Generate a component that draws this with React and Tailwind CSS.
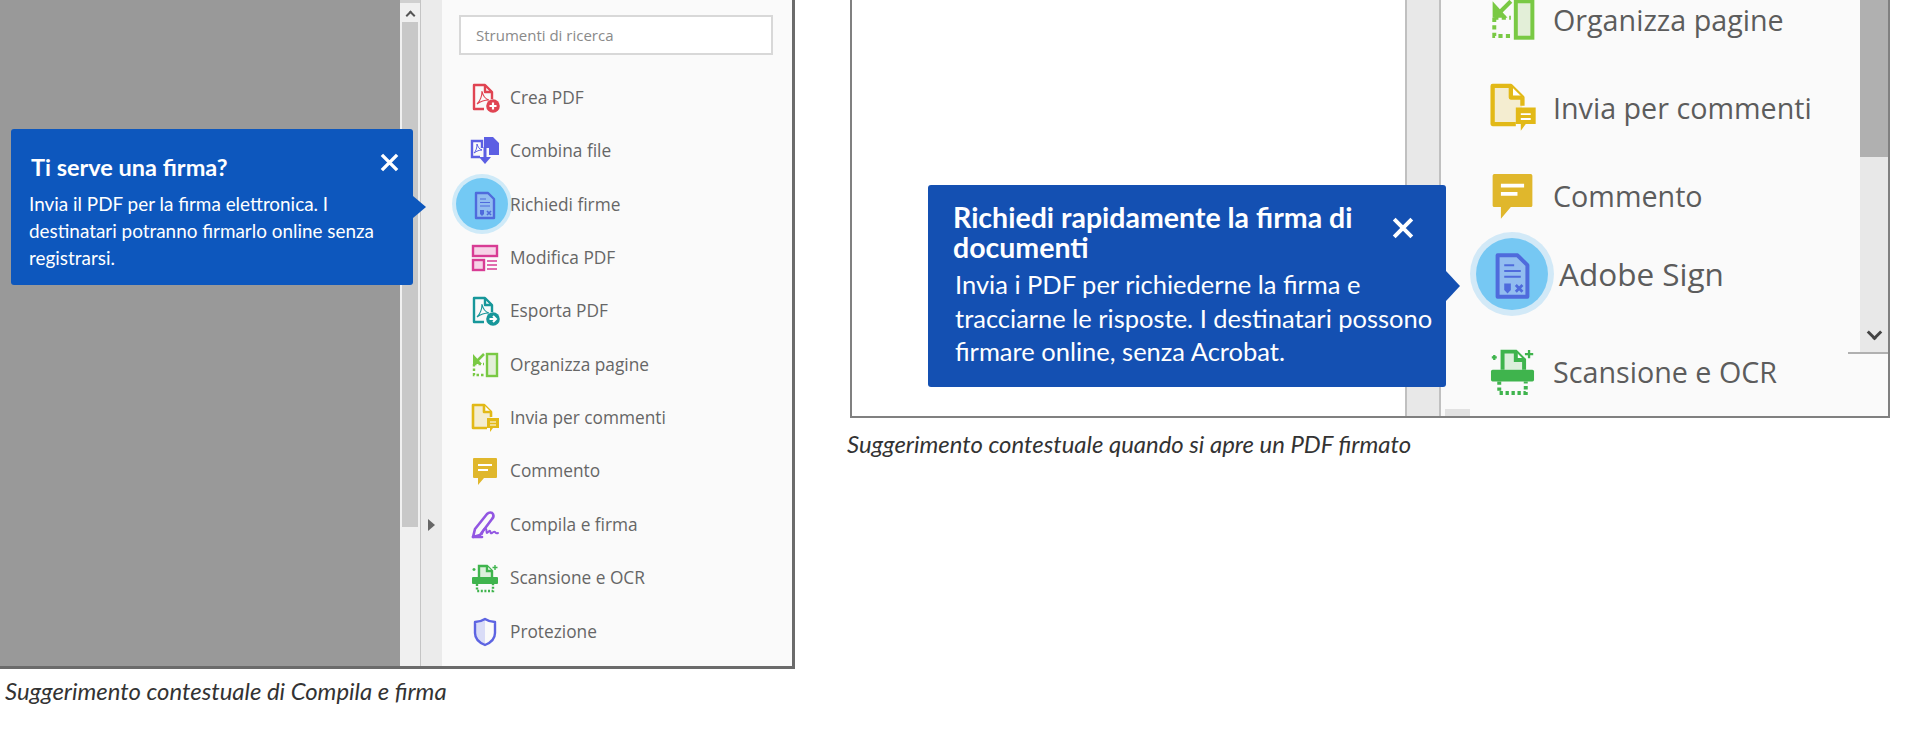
import React from "react";

const panelFont = "font-['Open_Sans',sans-serif]";
const tipFont = "font-['Lato',sans-serif]";

function PdfDoc({ color, children }) {
  return (
    <svg viewBox="0 0 32 32" className="h-full w-full" fill="none" stroke={color} strokeWidth="2.400">
      <path d="M15 27H5V3h11l7 7v7" strokeLinejoin="round" />
      <path d="M16 3v7h7" strokeLinejoin="round" />
      <path d="M8 22c3-3 5-8 5-13 1 5 3 8 7 9-4 0-8 1-12 4z" strokeWidth="1.100" />
      <circle cx="24" cy="24" r="6.800" fill={color} stroke="none" />
      {children}
    </svg>
  );
}

const CreaIcon = () => (
  <PdfDoc color="#e04452">
    <path d="M24 20.500v7M20.500 24h7" stroke="#fff" strokeWidth="2.200" />
  </PdfDoc>
);

const EsportaIcon = () => (
  <PdfDoc color="#17979a">
    <path d="M20.500 24h6M24 21l3 3-3 3" stroke="#fff" strokeWidth="2" />
  </PdfDoc>
);

const CombinaIcon = () => (
  <svg viewBox="0 0 32 32" className="h-full w-full" fill="none" stroke="#5c5fe3" strokeWidth="2.400">
    <path d="M11 22H3V6h10v7" />
    <path d="M5 18c2-2 3-5 3-9 1 3 2 5 5 6-3 0-5 1-8 3z" strokeWidth="1" />
    <path d="M15 2h9l6 6v12H20v-7h-5z" fill="#5c5fe3" stroke="none" />
    <path d="M16 12v12" strokeWidth="3" />
    <path d="M10 22h12l-6 7z" fill="#5c5fe3" stroke="none" />
  </svg>
);

const SignIcon = () => (
  <svg viewBox="0 0 32 32" className="h-full w-full" fill="#92bdf0" stroke="#4f6bdc" strokeWidth="2.400">
    <path d="M7 5h12l6 6v19H7z" strokeLinejoin="round" />
    <path d="M11 11h6M11 14.500h10M11 18h10" strokeWidth="1.200" fill="none" />
    <path d="M11 22h4v4l-2 2-2-2z" fill="#4f6bdc" stroke="none" />
    <path d="M18 23l4 4M22 23l-4 4" strokeWidth="1.700" fill="none" />
  </svg>
);

const ModificaIcon = () => (
  <svg viewBox="0 0 32 32" className="h-full w-full" fill="none" stroke="#d83c94" strokeWidth="2.400">
    <rect x="4" y="4" width="24" height="10" fill="#f7d3e7" />
    <rect x="4" y="18" width="11" height="10" fill="#f7d3e7" />
    <path d="M18 19h10M18 23h10M18 27h10" strokeWidth="1.600" />
  </svg>
);

const OrganizzaIcon = () => (
  <svg viewBox="0 0 32 32" className="h-full w-full" fill="none" stroke="#79c944" strokeWidth="2.400">
    <rect x="18" y="5" width="10" height="22" fill="#e3efd8" />
    <path d="M5 15h10M5 15v11h10" strokeDasharray="2.500 2" />
    <path d="M15 5L7 13" strokeWidth="2.500" />
    <path d="M4 5v10h9z" fill="#79c944" stroke="none" />
  </svg>
);

const InviaIcon = () => (
  <svg viewBox="0 0 32 32" className="h-full w-full" fill="none" stroke="#e2b917" strokeWidth="2.600">
    <path d="M18 26H4V3h11l7 7v5" fill="#f4edd0" strokeLinejoin="round" />
    <path d="M15 3v7h7" fill="#fff" strokeLinejoin="round" />
    <path d="M18 16h12v10h-6l-3 4v-4h-3z" fill="#e2b917" stroke="none" />
    <path d="M21 20h6M21 23h6" stroke="#fff" strokeWidth="1.200" />
  </svg>
);

const CommentoIcon = () => (
  <svg viewBox="0 0 32 32" className="h-full w-full" fill="none">
    <path d="M5 3h22a1 1 0 0 1 1 1v18a1 1 0 0 1-1 1H15l-6 7v-7H5a1 1 0 0 1-1-1V4a1 1 0 0 1 1-1z" fill="#e0b72c" />
    <path d="M9 10h14M9 15h10" stroke="#fff" strokeWidth="2.200" />
  </svg>
);

const CompilaIcon = () => (
  <svg viewBox="0 0 32 32" className="h-full w-full" fill="none" stroke="#9256e2" strokeWidth="2.600" strokeLinejoin="round" strokeLinecap="round">
    <path d="M4 28l2-8L18 5c2-2 5-2 6 0 1 2 0 4-1 5L11 26z" />
    <path d="M4 28h9" />
    <path d="M13 25c1-5 3-6 4-5s0 4 1 4 2-3 3-2 0 3 2 2 2-2 3-1 1 2 3 1" strokeWidth="2" />
  </svg>
);

const ScansioneIcon = () => (
  <svg viewBox="0 0 32 32" className="h-full w-full" fill="none" stroke="#3fb44d" strokeWidth="2.400">
    <path d="M10 15V4h8l5 5v6" fill="#dcefdc" />
    <path d="M18 4v5h5" fill="#fff" />
    <rect x="3" y="15" width="26" height="7" rx="1" fill="#3fb44d" stroke="none" />
    <path d="M8 22v7h16v-7" strokeDasharray="2 1.600" />
    <path d="M26 3v5M23.500 5.500h5M5 6v3M3.500 7.500h3" strokeWidth="1.400" />
  </svg>
);

const ProtezioneIcon = () => (
  <svg viewBox="0 0 32 32" className="h-full w-full" fill="none" stroke="#5d64e2" strokeWidth="2.400">
    <path d="M16 4c-3 2-6 3-10 3v10c0 6 5 10 10 12z" fill="#d9dcf7" stroke="none" />
    <path d="M16 3c3 2 6 3 10 3v11c0 6-5 10-10 12-5-2-10-6-10-12V6c4 0 7-1 10-3z" strokeLinejoin="round" />
  </svg>
);

const leftRows = [
  ["Crea PDF", CreaIcon],
  ["Combina file", CombinaIcon],
  ["Richiedi firme", SignIcon, true],
  ["Modifica PDF", ModificaIcon],
  ["Esporta PDF", EsportaIcon],
  ["Organizza pagine", OrganizzaIcon],
  ["Invia per commenti", InviaIcon],
  ["Commento", CommentoIcon],
  ["Compila e firma", CompilaIcon],
  ["Scansione e OCR", ScansioneIcon],
  ["Protezione", ProtezioneIcon],
];

function CloseX({ className }) {
  return (
    <svg viewBox="0 0 20 20" className={className} fill="none" stroke="#fff" strokeWidth="3.600">
      <path d="M2 2l16 16M18 2L2 18" />
    </svg>
  );
}

function LeftFrame() {
  return (
    <div className="relative flex h-[669px] w-[795px] overflow-hidden border-r-[3px] border-b-[3px] border-[#6b6b6b] bg-[#999999]">
      <div className="w-[400px] shrink-0" />
      {/* scrollbar */}
      <div className="flex w-[20px] shrink-0 flex-col items-center bg-[#f0f0f0]">
        <div className="h-[3px] w-full bg-[#d0d0d0]" />
        <span className="mt-[6px] h-[7px] w-[7px] translate-y-[3px] rotate-45 border-t-2 border-l-2 border-[#555]" />
        <div className="mt-[6px] h-[505px] w-[16px] bg-[#c8c8c8]" />
      </div>
      <div className="flex w-[22px] shrink-0 items-start justify-center border-l border-[#c4c4c4] bg-[#ebebeb] pt-[519px]">
        <span className="h-0 w-0 border-y-[6px] border-l-[7px] border-y-transparent border-l-[#666]" />
      </div>
      <div className={`flex-1 bg-[#fafafa] pt-[15px] ${panelFont}`}>
        <div className="mr-[19px] ml-[17px] flex h-[40px] items-center border-2 border-[#d8d8d8] bg-white pl-[15px] text-[15px] text-[#8a8a8a]">
          Strumenti di ricerca
        </div>
        <div className="mt-[16px] flex flex-col">
          {leftRows.map(([label, Icon, active]) => (
            <div key={label} className="flex h-[53.4px] items-center pl-[27px] text-[17.300px] text-[#666666]">
              <div className="relative h-[32px] w-[32px] shrink-0">
                {active && (
                  <span className="absolute top-1/2 left-[13px] h-[52px] w-[52px] -translate-x-1/2 -translate-y-1/2 rounded-full bg-[#73c9f4] ring-[4px] ring-[#cfeaf8]" />
                )}
                <div className="relative h-full w-full">
                  <Icon />
                </div>
              </div>
              <span className="relative ml-[9px]">{label}</span>
            </div>
          ))}
        </div>
      </div>

      {/* tooltip */}
      <div className={`absolute top-[129px] left-[11px] h-[156px] w-[402px] rounded-[3px] bg-[#0d57bd] pt-[25px] pl-[18px] text-white ${tipFont}`}>
        <div className="pl-[2px] text-[23.500px] leading-[26px] font-bold">Ti serve una firma?</div>
        <div className="mt-[10px] w-[365px] text-[18.900px] leading-[27px]">
          Invia il PDF per la firma elettronica. I destinatari potranno firmarlo online senza registrarsi.
        </div>
        <CloseX className="absolute top-[24px] right-[14px] h-[19px] w-[19px]" />
        <span className="absolute top-[67px] -right-[13px] h-0 w-0 border-y-[11px] border-l-[13px] border-y-transparent border-l-[#0d57bd]" />
      </div>
    </div>
  );
}

const rightRows = [
  ["Organizza pagine", OrganizzaIcon, "h-[88.400px]"],
  ["Invia per commenti", InviaIcon, "h-[88.400px]"],
  ["Commento", CommentoIcon, "h-[88.400px]"],
  ["Adobe Sign", SignIcon, "h-[88.400px] pb-[18px]", true],
  ["Scansione e OCR", ScansioneIcon, "h-[90px]"],
];

function RightFrame() {
  return (
    <div className="relative ml-[3px] flex h-[418px] w-[1040px] overflow-hidden border-x-2 border-b-2 border-[#808080] bg-white">
      <div className="w-[553px] shrink-0" />
      <div className="w-[36px] shrink-0 border-x-2 border-[#c0c0c0] bg-[#e8e8e8]" />
      <div className={`-mt-[24px] flex w-[419px] shrink-0 flex-col bg-[#fafafa] pl-[45px] ${panelFont}`}>
        {rightRows.map(([label, Icon, rowClass, active]) => (
          <div key={label} className={`flex items-center text-[28.700px] text-[#5c5c5c] ${rowClass}`}>
            <div className="relative h-[53px] w-[53px] shrink-0">
              {active && (
                <span className="absolute top-1/2 left-[26px] h-[72px] w-[72px] -translate-x-1/2 -translate-y-1/2 rounded-full bg-[#76c8f3] ring-[6px] ring-[#d2e9f7]" />
              )}
              <div className="relative h-full w-full">
                <Icon />
              </div>
            </div>
            <span className={active ? "ml-[20px] text-[31.500px]" : "ml-[14px]"}>{label}</span>
          </div>
        ))}
      </div>
      {/* scrollbar */}
      <div className="relative w-[28px] shrink-0 bg-[#fafafa]">
        <div className="flex h-[352px] flex-col items-center bg-[#e8e8e8]">
          <div className="h-[157px] w-full bg-[#b0b0b0]" />
          <span className="mt-[170px] h-[11px] w-[11px] rotate-45 border-r-[3px] border-b-[3px] border-[#444]" />
        </div>
        <span className="absolute top-[352px] -left-[12px] h-[2px] w-[40px] bg-[#b0b0b0]" />
      </div>
      <span className="absolute bottom-0 left-[593px] h-[7px] w-[25px] bg-[#e2e2e2]" />

      {/* tooltip */}
      <div className={`absolute top-[185px] left-[76px] h-[202px] w-[518px] rounded-[3px] bg-[#1450b2] pt-[17px] pl-[25px] text-white ${tipFont}`}>
        <div className="w-[440px] text-[28.500px] leading-[30px] font-bold">Richiedi rapidamente la firma di documenti</div>
        <div className="mt-[6px] w-[490px] pl-[2px] text-[25.500px] leading-[33.500px]">
          Invia i PDF per richiederne la firma e tracciarne le risposte. I destinatari possono firmare online, senza Acrobat.
        </div>
        <CloseX className="absolute top-[32px] right-[32px] h-[22px] w-[22px]" />
        <span className="absolute top-[86px] -right-[14px] h-0 w-0 border-y-[15px] border-l-[14px] border-y-transparent border-l-[#1450b2]" />
      </div>
    </div>
  );
}

export default function App() {
  return (
    <div className={`flex h-[738px] w-[1920px] overflow-hidden bg-white ${tipFont}`}>
      <div className="w-[795px] shrink-0">
        <LeftFrame />
        <p className="mt-[8px] pl-[5px] text-[23.900px] leading-[28px] text-[#333333] italic">
          Suggerimento contestuale di Compila e firma
        </p>
      </div>
      <div className="ml-[52px] w-[1045px] shrink-0">
        <RightFrame />
        <p className="mt-[12px] text-[23.900px] leading-[28px] text-[#333333] italic">
          Suggerimento contestuale quando si apre un PDF firmato
        </p>
      </div>
    </div>
  );
}
